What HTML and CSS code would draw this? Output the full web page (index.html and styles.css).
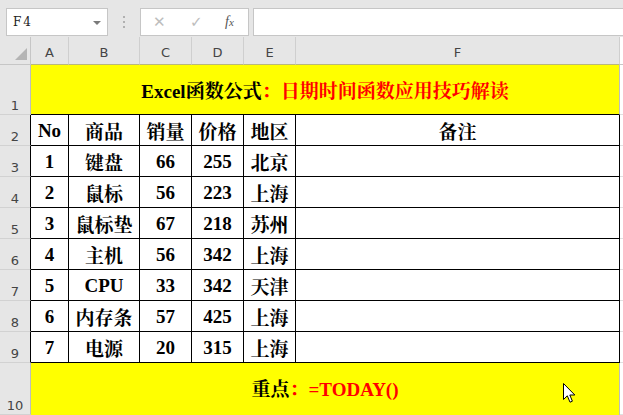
FILE: index.html
```html
<!DOCTYPE html>
<html>
<head>
<meta charset="utf-8">
<link rel="stylesheet" href="styles.css">
</head>
<body>
<div class="app">
  <div class="toolbar">
    <div class="namebox"><span class="name">F4</span><span class="dd"></span></div>
    <div class="grip"><i></i><i></i><i></i></div>
    <div class="fbtns">
      <span class="fb x">✕</span>
      <span class="fb ok">✓</span>
      <span class="fb fx"><i>f</i><small>x</small></span>
    </div>
    <div class="finput"></div>
  </div>
  <div class="sheet">
    <div class="ch corner"><span class="tri"></span></div>
    <div class="ch">A</div><div class="ch">B</div><div class="ch">C</div><div class="ch">D</div><div class="ch">E</div><div class="ch">F</div><div class="ch rest"></div>

    <div class="rh">1</div>
    <div class="merged title">Excel函数公式<span class="red">：日期时间函数应用技巧解读</span></div>
    <div class="rest"></div>

    <div class="rh dk">2</div><div class="c">No</div><div class="c">商品</div><div class="c">销量</div><div class="c">价格</div><div class="c">地区</div><div class="c">备注</div><div class="rest"></div>
    <div class="rh dk">3</div><div class="c">1</div><div class="c">键盘</div><div class="c">66</div><div class="c">255</div><div class="c">北京</div><div class="c"></div><div class="rest"></div>
    <div class="rh dk">4</div><div class="c">2</div><div class="c">鼠标</div><div class="c">56</div><div class="c">223</div><div class="c">上海</div><div class="c"></div><div class="rest"></div>
    <div class="rh dk">5</div><div class="c">3</div><div class="c">鼠标垫</div><div class="c">67</div><div class="c">218</div><div class="c">苏州</div><div class="c"></div><div class="rest"></div>
    <div class="rh dk">6</div><div class="c">4</div><div class="c">主机</div><div class="c">56</div><div class="c">342</div><div class="c">上海</div><div class="c"></div><div class="rest"></div>
    <div class="rh dk">7</div><div class="c">5</div><div class="c">CPU</div><div class="c">33</div><div class="c">342</div><div class="c">天津</div><div class="c"></div><div class="rest"></div>
    <div class="rh dk">8</div><div class="c">6</div><div class="c">内存条</div><div class="c">57</div><div class="c">425</div><div class="c">上海</div><div class="c"></div><div class="rest"></div>
    <div class="rh dk">9</div><div class="c">7</div><div class="c">电源</div><div class="c">20</div><div class="c">315</div><div class="c">上海</div><div class="c"></div><div class="rest"></div>

    <div class="rh">10</div>
    <div class="merged note">重点<span class="red">：=TODAY()</span></div>
    <div class="rest"></div>

    <svg class="cursor" width="13" height="21" viewBox="0 0 13 21">
      <path d="M0.5 0.5 L0.5 16.5 L4.3 12.8 L7 19.2 L9.4 18.2 L6.8 12 L11.8 12 Z" fill="#fff" stroke="#000" stroke-width="1" stroke-linejoin="miter"/>
    </svg>
  </div>
</div>
</body>
</html>
```
FILE: styles.css
```css
* { box-sizing: border-box; }
html, body { margin: 0; padding: 0; }
body { width: 623px; height: 415px; overflow: hidden; background: #e6e6e6; }
.app { width: 623px; height: 415px; display: flex; flex-direction: column; }

.toolbar {
  height: 37px;
  display: flex;
  align-items: flex-start;
  padding: 8px 0 0 6px;
  background: #e6e6e6;
}
.namebox {
  width: 102px; height: 28px;
  background: #fff;
  border: 1px solid #c6c6c6;
  display: flex; align-items: center; justify-content: space-between;
  padding: 0 6px 0 6px;
}
.name { font-family: "DejaVu Serif", "Liberation Serif", serif; font-size: 12px; color: #222; letter-spacing: 2px; }
.dd { width: 0; height: 0; border-left: 4px solid transparent; border-right: 4px solid transparent; border-top: 4px solid #7a7a7a; margin-top: 1px; }
.grip { width: 32px; height: 28px; display: flex; flex-direction: column; align-items: center; justify-content: center; gap: 3px; }
.grip i { width: 2px; height: 2px; background: #b0b0b0; display: block; }
.fbtns {
  width: 109px; height: 28px;
  background: #fff;
  border: 1px solid #c6c6c6;
  display: flex; align-items: center;
  padding-left: 12px;
}
.fb { font-family: "DejaVu Sans", sans-serif; color: #bdbdbd; font-size: 15px; }
.fb.x { width: 37px; }
.fb.ok { width: 35px; font-size: 15px; }
.fb.fx { color: #555; font-family: "Liberation Serif", serif; font-size: 14px; }
.fb.fx small { font-size: 11px; font-style: italic; }
.finput {
  flex: 1; height: 28px; margin-left: 4px;
  background: #fff;
  border-top: 1px solid #c6c6c6; border-bottom: 1px solid #c6c6c6; border-left: 1px solid #c6c6c6;
}

.sheet {
  position: relative;
  flex: 1;
  display: grid;
  grid-template-columns: 31px 38px 71px 52px 52px 52px 324px 1fr;
  grid-template-rows: 28px 50px repeat(8, 31px) 1fr;
  background: #fff;
}
.ch {
  background: #e6e6e6;
  border-right: 1px solid #cfcfcf;
  border-bottom: 1px solid #b9b87c;
  font-family: "DejaVu Sans", "Open Sans", sans-serif;
  font-size: 13px; color: #444;
  display: flex; align-items: center; justify-content: center;
  padding-top: 3px;
}
.ch.corner { border-right: 1px solid #c6c6c6; border-bottom: 1px solid #c6c6c6; position: relative; }
.ch.rest { border-right: none; border-bottom: 1px solid #c6c6c6; }
.tri {
  position: absolute; right: 3px; bottom: 4px;
  width: 0; height: 0;
  border-left: 12px solid transparent;
  border-bottom: 12px solid #b4b4b4;
}
.rh {
  background: #e6e6e6;
  border-right: 1px solid #bdbdbd;
  border-bottom: 1px solid #d2d2d2;
  font-family: "DejaVu Sans", "Open Sans", sans-serif;
  font-size: 13px; color: #444;
  display: flex; align-items: flex-end; justify-content: center;
  padding-bottom: 1px;
}
.rh.dk { border-right: 1px solid #000; }
.rest { background: #fff; border-bottom: 1px solid #e0e0e0; }
.merged {
  grid-column: span 6;
  background: #ff0;
  border-right: 1px solid #bdbdbd;
  border-bottom: 1px solid #000;
  display: flex; align-items: center; justify-content: center;
  font-family: "Liberation Serif", "Noto Serif CJK SC", "Noto Sans CJK SC", serif;
  font-weight: bold; font-size: 19px; color: #000;
  padding-bottom: 1px;
}
.merged.note { border-bottom: none; padding-bottom: 4px; }
.red { color: #f00; }
.c {
  border-right: 1px solid #000;
  border-bottom: 1px solid #000;
  display: flex; align-items: center; justify-content: center;
  font-family: "Liberation Serif", "Noto Serif CJK SC", "Noto Sans CJK SC", serif;
  font-weight: bold; font-size: 19px; color: #000;
  padding-top: 1px;
  white-space: nowrap;
}
.cursor { position: absolute; left: 563px; top: 346px; }
```
